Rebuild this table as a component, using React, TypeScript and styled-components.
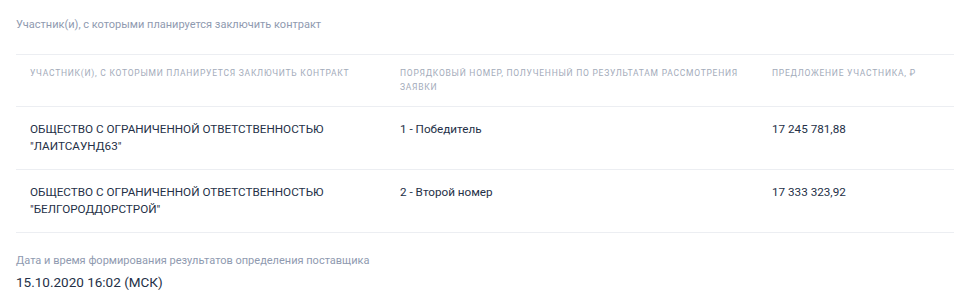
import styled, { createGlobalStyle } from "styled-components";

const GlobalStyle = createGlobalStyle`
  body {
    margin: 0;
    background: #ffffff;
    font-family: Roboto, "Liberation Sans", sans-serif;
  }
`;

const Section = styled.section`
  padding: 18px 6px 0 16px;
`;

const Caption = styled.div`
  font-size: 11px;
  line-height: 14px;
  color: #8f9ab0;
`;

const Table = styled.div`
  margin-top: 22px;
  border-top: 1px solid #eceef2;
`;

const Row = styled.div<{ $head?: boolean }>`
  display: grid;
  grid-template-columns: 370px 372px 1fr;
  border-bottom: 1px solid #eceef2;
  padding: ${(p) => (p.$head ? "11px 0 12px" : "14px 0")};
  min-height: ${(p) => (p.$head ? "28px" : "34px")};
`;

const HeadCell = styled.div`
  padding: 0 14px;
  font-size: 8.5px;
  line-height: 14px;
  letter-spacing: 0.75px;
  text-transform: uppercase;
  color: #a3abba;
`;

const Cell = styled.div`
  padding: 0 14px;
  font-size: 11.7px;
  line-height: 17px;
  color: #243047;
`;

const Footer = styled.div`
  margin-top: 21px;
`;

const Value = styled.div`
  margin-top: 5px;
  font-size: 13.5px;
  line-height: 18px;
  color: #243047;
`;

const rows = [
  {
    name: "ОБЩЕСТВО С ОГРАНИЧЕННОЙ ОТВЕТСТВЕННОСТЬЮ",
    short: "\"ЛАИТСАУНД63\"",
    place: "1 - Победитель",
    price: "17 245 781,88",
  },
  {
    name: "ОБЩЕСТВО С ОГРАНИЧЕННОЙ ОТВЕТСТВЕННОСТЬЮ",
    short: "\"БЕЛГОРОДДОРСТРОЙ\"",
    place: "2 - Второй номер",
    price: "17 333 323,92",
  },
];

const App = () => {
  return (
    <>
      <GlobalStyle />
      <Section>
        <Caption>Участник(и), с которыми планируется заключить контракт</Caption>
        <Table>
          <Row $head>
            <HeadCell>Участник(и), с которыми планируется заключить контракт</HeadCell>
            <HeadCell>Порядковый номер, полученный по результатам рассмотрения заявки</HeadCell>
            <HeadCell>Предложение участника, ₽</HeadCell>
          </Row>
          {rows.map((r) => (
            <Row key={r.short}>
              <Cell>
                {r.name}
                <br />
                {r.short}
              </Cell>
              <Cell>{r.place}</Cell>
              <Cell>{r.price}</Cell>
            </Row>
          ))}
        </Table>
        <Footer>
          <Caption>Дата и время формирования результатов определения поставщика</Caption>
          <Value>15.10.2020 16:02 (МСК)</Value>
        </Footer>
      </Section>
    </>
  );
};

export default App;
